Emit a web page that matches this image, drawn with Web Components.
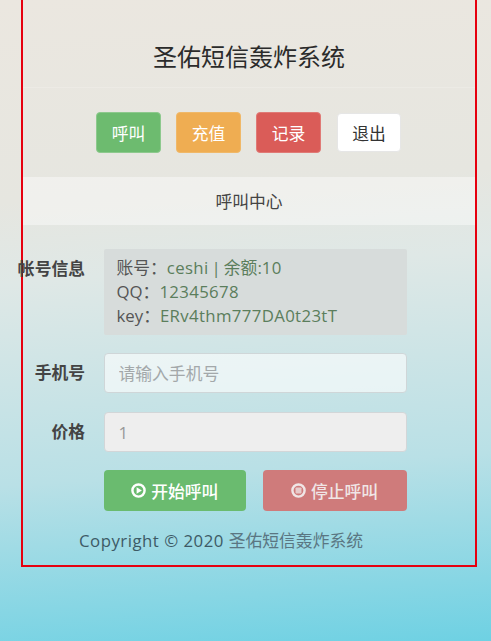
<!DOCTYPE html>
<html lang="zh"><head><meta charset="utf-8"><title>圣佑短信轰炸系统</title>
<style>
html,body{margin:0;padding:0}
body{height:641px;overflow:hidden;background:linear-gradient(176deg,#ebe7e0 0%,#e6e6e0 30%,#dfe8e6 42%,#b9e0e6 72%,#6ed1e3 100%);font-family:"Open Sans","Noto Sans CJK SC",sans-serif;font-size:16.8px;color:#333}
em{font-style:normal;color:#5b7e5c}
.lat{letter-spacing:.35px}
.sep{margin:0 3px}
.cjk{color:#5a7682}
</style></head><body>
<call-app>
  <app-header>圣佑短信轰炸系统</app-header>
  <nav-bar>
    <nav-btn tone="green">呼叫</nav-btn>
    <nav-btn tone="orange">充值</nav-btn>
    <nav-btn tone="red">记录</nav-btn>
    <nav-btn tone="white">退出</nav-btn>
  </nav-bar>
  <panel-head>呼叫中心</panel-head>
  <form-row label="帐号信息" style="margin-top:24px">
    <info-box>
      <div>账号：<em class="lat">ceshi</em><em class="sep">|</em><em>余额:</em><em class="lat">10</em></div>
      <div>QQ：<em class="lat">12345678</em></div>
      <div>key：<em class="lat">ERv4thm777DA0t23tT</em></div>
    </info-box>
  </form-row>
  <form-row label="手机号" style="margin-top:18px"><text-field placeholder="请输入手机号"></text-field></form-row>
  <form-row label="价格" style="margin-top:19px"><text-field value="1" disabled></text-field></form-row>
  <form-row style="margin-top:18px">
    <action-buttons></action-buttons>
  </form-row>
  <app-footer><span class="lat" style="letter-spacing:.5px">Copyright © 2020&nbsp;</span><span class="cjk">圣佑短信轰炸系统</span></app-footer>
</call-app>
<script>
const def=(name,css,html)=>{customElements.define(name,class extends HTMLElement{
  constructor(){super();const r=this.attachShadow({mode:"open"});r.innerHTML=`<style>${css}</style>${typeof html==="function"?html(this):html}`;}
})};
def("call-app",`:host{display:block;box-sizing:border-box;width:456px;height:567px;margin-left:21px;border:solid #e6000f;border-width:0 2.5px 2.5px 2.5px}`,`<slot></slot>`);
def("app-header",`:host{display:flex;align-items:center;justify-content:center;box-sizing:border-box;height:88px;padding-top:27px;font-size:24px;color:#2b2b2b;line-height:34px;border-bottom:1px solid rgba(255,255,255,.18)}`,`<slot></slot>`);
def("nav-bar",`:host{display:flex;justify-content:center;align-items:center;gap:15px;padding:24px 1px 24px 0;height:41px}`,`<slot></slot>`);
def("nav-btn",`:host{display:flex;align-items:center;justify-content:center;box-sizing:border-box;width:65px;height:41px;border-radius:4px;border:1px solid transparent;color:#fff}
:host([tone=green]){background:#6dbb6f;border-color:#8dc98d}
:host([tone=orange]){background:#efad52;border-color:#f0b868}
:host([tone=red]){background:#da5c58;border-color:#e07a76}
:host([tone=white]){width:64px;height:39px;background:#fff;border-color:#e6e6e6;color:#333;margin-left:1px}`,`<slot></slot>`);
def("panel-head",`:host{display:flex;align-items:center;justify-content:center;height:48px;background:rgba(255,255,255,.42);color:#444}`,`<slot></slot>`);
def("form-row",`:host{display:flex;gap:18.5px}
.l{flex:0 0 62px;min-width:0;display:flex;justify-content:flex-end;white-space:nowrap;font-weight:700;color:#444;line-height:40px;height:40px}
.v{flex:0 0 303px}`,el=>`<div class="l">${el.getAttribute("label")||""}</div><div class="v"><slot></slot></div>`);
def("info-box",`:host{display:block;box-sizing:border-box;height:86px;padding:7px 13px;background:#d7dcdb;border-radius:2px;line-height:24px;color:#555;white-space:nowrap}`,`<slot></slot>`);
def("text-field",`:host{display:block}
input{display:block;box-sizing:border-box;width:100%;height:40px;padding:0 14px;border:1.5px solid #cfd6d8;border-radius:4px;background:rgba(255,255,255,.6);font:inherit;color:#888;outline:none}
input::placeholder{color:#a3a8aa;opacity:1}
input:disabled{background:#eee;border-color:#d2d6d8;color:#999}`,el=>`<input type="text"${el.getAttribute("placeholder")?` placeholder="${el.getAttribute("placeholder")}"`:""}${el.getAttribute("value")?` value="${el.getAttribute("value")}"`:""}${el.hasAttribute("disabled")?" disabled":""}>`);
def("action-buttons",`:host{display:flex;justify-content:space-between;height:41px}
.b{display:flex;align-items:center;justify-content:center;gap:5px;box-sizing:border-box;height:41px;border-radius:4px;color:#fff;font-weight:500}
.go{width:142.5px;background:#6abb6f}
.stop{width:144px;background:#cf7b7b;color:#f0e6e6}
svg{width:15px;height:15px;display:block}`,`<div class="b go"><svg viewBox="0 0 16 16"><circle cx="8" cy="8" r="6.5" fill="none" stroke="currentColor" stroke-width="2.6"/><path d="M6 4.6 11.6 8 6 11.4z" fill="currentColor"/></svg>开始呼叫</div>
<div class="b stop"><svg viewBox="0 0 16 16"><circle cx="8" cy="8" r="6.5" fill="none" stroke="currentColor" stroke-width="2.6"/><rect x="4.8" y="4.8" width="6.4" height="6.4" rx=".8" fill="currentColor" opacity=".75"/></svg>停止呼叫</div>`);
def("app-footer",`:host{display:flex;justify-content:center;box-sizing:border-box;width:396px;margin-top:17px;line-height:26px;color:#3d5a66;white-space:nowrap}`,`<slot></slot>`);
</script>
</body></html>
